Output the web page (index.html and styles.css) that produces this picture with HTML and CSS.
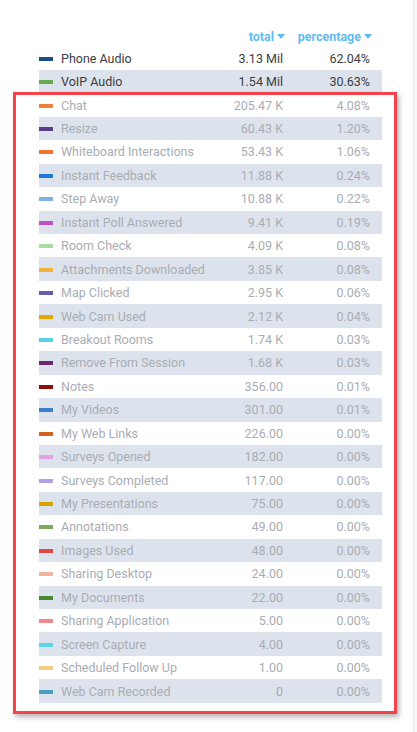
FILE: index.html
```html
<!DOCTYPE html>
<html>
<head>
<meta charset="utf-8">
<link rel="stylesheet" href="styles.css">
</head>
<body>
<div class="page">
  <div class="main">
    <div class="table">
      <div class="head">
        <span class="sw-space"></span>
        <span class="lbl"></span>
        <span class="h num">total<i class="caret"></i></span>
        <span class="h pct">percentage<i class="caret"></i></span>
      </div>
      <div class="row"><span class="sw" style="background:#1d4c8a"></span><span class="lbl">Phone Audio</span><span class="num">3.13 Mil</span><span class="pct">62.04%</span></div>
      <div class="row alt"><span class="sw" style="background:#6aa84f"></span><span class="lbl">VoIP Audio</span><span class="num">1.54 Mil</span><span class="pct">30.63%</span></div>
      <div class="row dim"><span class="sw" style="background:#f0813c"></span><span class="lbl">Chat</span><span class="num">205.47 K</span><span class="pct">4.08%</span></div>
      <div class="row dim alt"><span class="sw" style="background:#5b3f86"></span><span class="lbl">Resize</span><span class="num">60.43 K</span><span class="pct">1.20%</span></div>
      <div class="row dim"><span class="sw" style="background:#f0742e"></span><span class="lbl">Whiteboard Interactions</span><span class="num">53.43 K</span><span class="pct">1.06%</span></div>
      <div class="row dim alt"><span class="sw" style="background:#1f78d1"></span><span class="lbl">Instant Feedback</span><span class="num">11.88 K</span><span class="pct">0.24%</span></div>
      <div class="row dim"><span class="sw" style="background:#7eb3e0"></span><span class="lbl">Step Away</span><span class="num">10.88 K</span><span class="pct">0.22%</span></div>
      <div class="row dim alt"><span class="sw" style="background:#c34fc6"></span><span class="lbl">Instant Poll Answered</span><span class="num">9.41 K</span><span class="pct">0.19%</span></div>
      <div class="row dim"><span class="sw" style="background:#a9dca0"></span><span class="lbl">Room Check</span><span class="num">4.09 K</span><span class="pct">0.08%</span></div>
      <div class="row dim alt"><span class="sw" style="background:#f2b23a"></span><span class="lbl">Attachments Downloaded</span><span class="num">3.85 K</span><span class="pct">0.08%</span></div>
      <div class="row dim"><span class="sw" style="background:#6b5bb0"></span><span class="lbl">Map Clicked</span><span class="num">2.95 K</span><span class="pct">0.06%</span></div>
      <div class="row dim alt"><span class="sw" style="background:#e6a800"></span><span class="lbl">Web Cam Used</span><span class="num">2.12 K</span><span class="pct">0.04%</span></div>
      <div class="row dim"><span class="sw" style="background:#5bd0e6"></span><span class="lbl">Breakout Rooms</span><span class="num">1.74 K</span><span class="pct">0.03%</span></div>
      <div class="row dim alt"><span class="sw" style="background:#6b2a6e"></span><span class="lbl">Remove From Session</span><span class="num">1.68 K</span><span class="pct">0.03%</span></div>
      <div class="row dim"><span class="sw" style="background:#8b0f0f"></span><span class="lbl">Notes</span><span class="num">356.00</span><span class="pct">0.01%</span></div>
      <div class="row dim alt"><span class="sw" style="background:#3e7ccc"></span><span class="lbl">My Videos</span><span class="num">301.00</span><span class="pct">0.01%</span></div>
      <div class="row dim"><span class="sw" style="background:#d2621e"></span><span class="lbl">My Web Links</span><span class="num">226.00</span><span class="pct">0.00%</span></div>
      <div class="row dim alt"><span class="sw" style="background:#e0a0e6"></span><span class="lbl">Surveys Opened</span><span class="num">182.00</span><span class="pct">0.00%</span></div>
      <div class="row dim"><span class="sw" style="background:#b0a0e6"></span><span class="lbl">Surveys Completed</span><span class="num">117.00</span><span class="pct">0.00%</span></div>
      <div class="row dim alt"><span class="sw" style="background:#d9a200"></span><span class="lbl">My Presentations</span><span class="num">75.00</span><span class="pct">0.00%</span></div>
      <div class="row dim"><span class="sw" style="background:#7aaa5c"></span><span class="lbl">Annotations</span><span class="num">49.00</span><span class="pct">0.00%</span></div>
      <div class="row dim alt"><span class="sw" style="background:#e04848"></span><span class="lbl">Images Used</span><span class="num">48.00</span><span class="pct">0.00%</span></div>
      <div class="row dim"><span class="sw" style="background:#f5b49a"></span><span class="lbl">Sharing Desktop</span><span class="num">24.00</span><span class="pct">0.00%</span></div>
      <div class="row dim alt"><span class="sw" style="background:#4a8a2e"></span><span class="lbl">My Documents</span><span class="num">22.00</span><span class="pct">0.00%</span></div>
      <div class="row dim"><span class="sw" style="background:#f08a8a"></span><span class="lbl">Sharing Application</span><span class="num">5.00</span><span class="pct">0.00%</span></div>
      <div class="row dim alt"><span class="sw" style="background:#5cd4ec"></span><span class="lbl">Screen Capture</span><span class="num">4.00</span><span class="pct">0.00%</span></div>
      <div class="row dim"><span class="sw" style="background:#f2cc80"></span><span class="lbl">Scheduled Follow Up</span><span class="num">1.00</span><span class="pct">0.00%</span></div>
      <div class="row dim alt"><span class="sw" style="background:#4b9fbf"></span><span class="lbl">Web Cam Recorded</span><span class="num">0</span><span class="pct">0.00%</span></div>
    </div>
    <div class="highlight"></div>
  </div>
  <div class="side"></div>
</div>
</body>
</html>
```

FILE: styles.css
```css
html, body {
  margin: 0;
  padding: 0;
  background: #ffffff;
}
body {
  font-family: Roboto, "Liberation Sans", sans-serif;
  font-size: 12.5px;
  color: #3a3d42;
}
.page {
  display: flex;
  width: 417px;
  height: 732px;
}
.main {
  position: relative;
  flex: 1;
  padding: 26px 0 0 39px;
}
.side {
  width: 3px;
  border-left: 1px solid #e6e8ec;
  background: #f6f7f9;
}
.table {
  width: 343px;
}
.head, .row {
  display: grid;
  grid-template-columns: 22px minmax(0, 1fr) 60px 87px;
  padding-right: 12px;
  align-items: center;
}
.head {
  height: 20.5px;
}
.h {
  color: #5fbcf0;
  font-weight: 700;
  display: flex;
  align-items: center;
  justify-content: flex-end;
}
.caret {
  display: inline-block;
  width: 0;
  height: 0;
  border-left: 4px solid transparent;
  border-right: 4px solid transparent;
  border-top: 5px solid #5fbcf0;
  margin-left: 3px;
  margin-right: -2px;
}
.row {
  height: 23.44px;
}
.row.alt {
  background: #dde3ec;
}
.sw {
  display: block;
  width: 14px;
  height: 4px;
  margin-top: 1px;
}
.lbl {
  white-space: nowrap;
}
.num, .pct {
  text-align: right;
  white-space: nowrap;
}
.row.dim {
  color: #a9adb3;
}
.highlight {
  position: absolute;
  left: 13px;
  top: 92px;
  width: 378px;
  height: 616px;
  border: 3px solid #f4434b;
  box-shadow: 2px 3px 5px rgba(0, 0, 0, 0.3);
  pointer-events: none;
}
```
